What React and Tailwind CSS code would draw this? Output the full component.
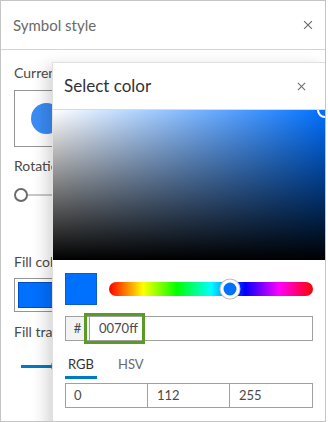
import React from 'react';

const font = { fontFamily: 'Lato, "Open Sans", sans-serif' };

function CloseIcon({ className }) {
    return (
        <svg viewBox="0 0 16 16" className={className} fill="none" stroke="currentColor" strokeWidth="1.3">
            <path d="M3.5 3.5l9 9M12.5 3.5l-9 9" />
        </svg>
    );
}

function SymbolPanel() {
    return (
        <div className="flex flex-col">
            <div className="h-[49px] flex items-center justify-between pl-[12px] pr-[10px] border-b border-[#d4d4d4]">
                <span className="text-[15px] text-[#6a6a6a]">Symbol style</span>
                <CloseIcon className="w-[14px] h-[14px] text-[#6a6a6a]" />
            </div>
            <div className="pl-[13px] flex flex-col">
                <div className="mt-[13px] h-[20px] text-[14px] leading-[20px] text-[#4a4a4a]">Current symbol</div>
                <div className="mt-[7px] w-[120px] h-[57px] border border-[#949494] flex items-center pl-[16px]">
                    <div className="w-[31px] h-[31px] rounded-full bg-[#3a8cf5]" />
                </div>
                <div className="mt-[9px] h-[20px] text-[14px] leading-[20px] text-[#4a4a4a]">Rotation</div>
                <div className="mt-[12px] h-[14px] flex items-center">
                    <div className="w-[14px] h-[14px] rounded-full border-2 border-[#6a6a6a] bg-white shrink-0" />
                    <div className="h-[2px] w-[200px] bg-[#c8c8c8]" />
                </div>
                <div className="mt-[50px] h-[20px] text-[14px] leading-[20px] text-[#4a4a4a]">Fill color</div>
                <div className="mt-[6px] w-[120px] h-[34px] border border-[#949494] p-[3px]">
                    <div className="w-full h-full bg-[#0070ff] border border-[#0050c0]" />
                </div>
                <div className="mt-[10px] h-[20px] text-[14px] leading-[20px] text-[#4a4a4a]">Fill transparency</div>
                <div className="mt-[14px] h-[20px] flex items-center pl-[7px]">
                    <div className="h-[3px] w-[32px] bg-[#007ac2]" />
                    <div className="w-[14px] h-[14px] rounded-full bg-[#6a6a6a] -ml-[2px]" />
                </div>
            </div>
        </div>
    );
}

function ColorPicker() {
    return (
        <div className="absolute left-[51px] top-[61px] w-[274px] h-[380px] bg-white border border-[#e0e0e0] shadow-[-6px_4px_14px_rgba(0,0,0,0.16)]">
            <div className="h-[47px] flex items-center justify-between pl-[11px] pr-[17px] border-b border-[#dadada]">
                <span className="text-[17px] text-[#323232]">Select color</span>
                <CloseIcon className="w-[13px] h-[13px] text-[#6a6a6a]" />
            </div>
            <div className="relative h-[150px] overflow-hidden bg-[linear-gradient(to_top,#000,rgba(0,0,0,0)),linear-gradient(to_right,#fff,#0070ff)]">
                <div className="absolute -right-[8px] -top-[8px] w-[16px] h-[16px] rounded-full border-2 border-white" />
            </div>
            <div className="px-[12px]">
                <div className="mt-[13px] flex items-center gap-[12px]">
                    <div className="w-[32px] h-[32px] bg-[#0070ff] border border-[#0a5ad0] shrink-0" />
                    <div className="relative flex-1 h-[14px] rounded-full bg-[linear-gradient(to_right,#ff0000,#ffff00,#00ff00,#00ffff,#0000ff,#ff00ff,#ff0000)]">
                        <div className="absolute left-[121px] top-1/2 -translate-x-1/2 -translate-y-1/2 w-[19px] h-[19px] rounded-full bg-[#0070ff] border-[3px] border-white shadow-[0_0_0_1px_#bdbdbd]" />
                    </div>
                </div>
                <div className="mt-[11px] relative flex h-[25px] border border-[#a0a0a0] text-[13px] text-[#4a4a4a]">
                    <div className="w-[24px] bg-[#f3f3f3] border-r border-[#a0a0a0] flex items-center justify-center">#</div>
                    <div className="flex-1 flex items-center pl-[9px]">0070ff</div>
                    <div className="absolute left-[18px] -top-[4px] w-[61px] h-[31px] border-[3px] border-[#5c9a26]" />
                </div>
                <div className="mt-[10px] flex text-[13px]">
                    <div className="w-[32px] h-[28px] flex items-center justify-center text-[#323232] border-b-[3px] border-[#007ac2] pt-[2px]">RGB</div>
                    <div className="ml-[21px] h-[28px] flex items-center text-[#6a6a6a] pb-[1px]">HSV</div>
                </div>
                <div className="mt-[4px] grid grid-cols-3 h-[25px] border border-[#a0a0a0] text-[13px] text-[#4a4a4a]">
                    <div className="flex items-center pl-[8px] border-r border-[#a0a0a0]">0</div>
                    <div className="flex items-center pl-[9px] border-r border-[#a0a0a0]">112</div>
                    <div className="flex items-center pl-[9px]">255</div>
                </div>
            </div>
        </div>
    );
}

export default function App() {
    return (
        <div className="w-[328px] h-[422px] bg-white" style={font}>
            <div className="relative w-[326px] h-[422px] border border-[#c4c4c4] overflow-hidden">
                <SymbolPanel />
                <ColorPicker />
            </div>
        </div>
    );
}
